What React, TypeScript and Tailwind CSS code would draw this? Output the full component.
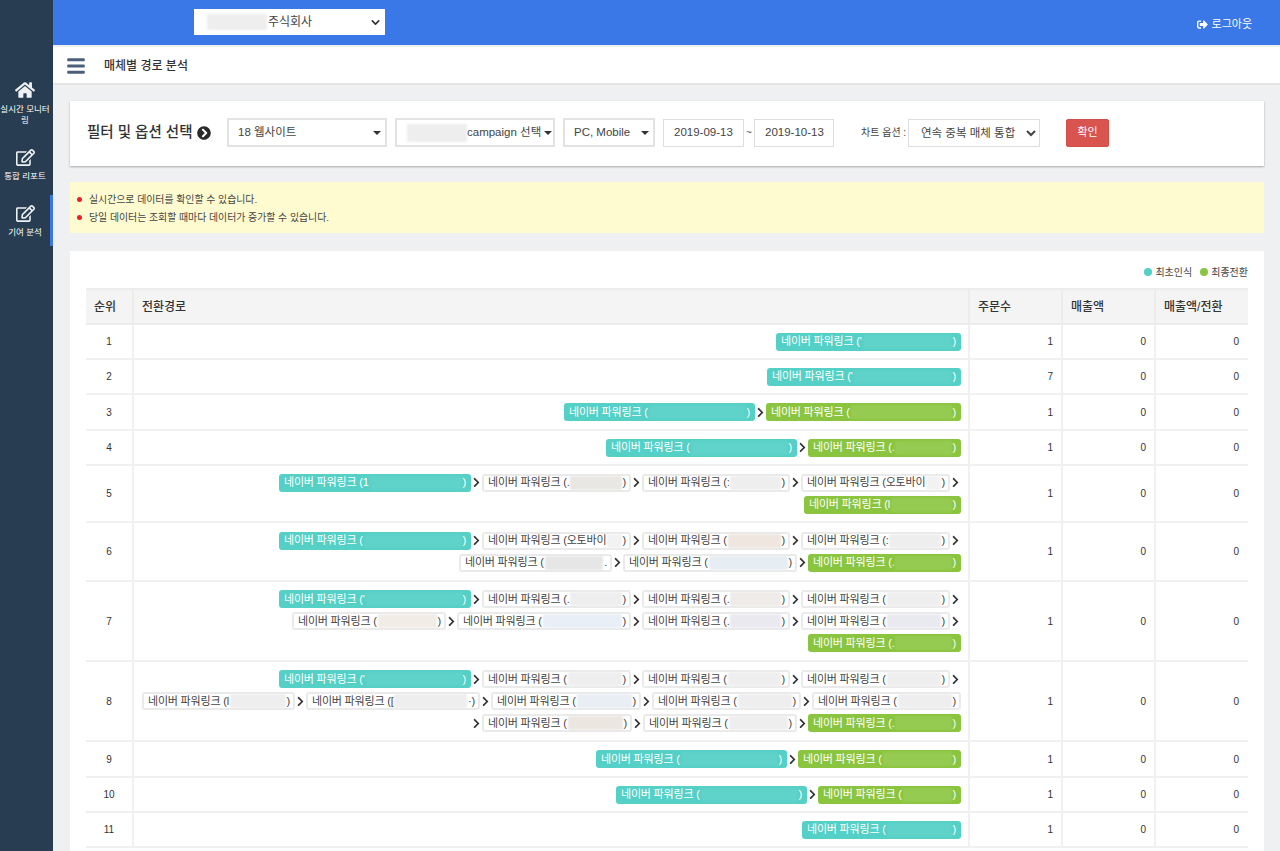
import { FaBars, FaChevronCircleRight, FaChevronRight, FaHome, FaRegEdit, FaSignOutAlt } from "react-icons/fa"
import { LuChevronDown } from "react-icons/lu"

type Kind = "first" | "last" | "mid"
type Chip = { kind: Kind; w: string; lead?: string; tone?: string; tail?: string }
type Row = { h: string; orders: number; lines: (Chip | ">")[][] }

const first = (w: string, lead = ""): Chip => ({ kind: "first", w, lead })
const last = (w: string, lead = ""): Chip => ({ kind: "last", w, lead })
const mid = (w: string, lead = "", tone = "bg-[#eeeeee]", tail = ")"): Chip => ({ kind: "mid", w, lead, tone, tail })

const rows: Row[] = [
  { h: "h-[35px]", orders: 1, lines: [[first("w-[185px]", "'")]] },
  { h: "h-[35px]", orders: 7, lines: [[first("w-[194px]", "'")]] },
  { h: "h-[36px]", orders: 1, lines: [[first("w-[191px]"), ">", last("w-[195px]")]] },
  { h: "h-[35px]", orders: 1, lines: [[first("w-[191px]"), ">", last("w-[153px]", ".")]] },
  {
    h: "h-[57px]",
    orders: 1,
    lines: [
      [first("w-[192px]", "1"), ">", mid("w-[149px]", ".", "bg-[#e9e7e3]"), ">", mid("w-[148px]", ":"), ">", mid("w-[149px]", "오토바이", "bg-[#f2f2f2]"), ">"],
      [last("w-[157px]", "l")],
    ],
  },
  {
    h: "h-[59px]",
    orders: 1,
    lines: [
      [first("w-[192px]"), ">", mid("w-[149px]", "오토바이", "bg-[#f2f2f2]"), ">", mid("w-[148px]", "", "bg-[#eee6df]"), ">", mid("w-[149px]", ":"), ">"],
      [mid("w-[153px]", "", "bg-[#e6e6e6]", "."), ">", mid("w-[174px]", "", "bg-[#e6edf3]"), ">", last("w-[153px]", ".")],
    ],
  },
  {
    h: "h-[80px]",
    orders: 1,
    lines: [
      [first("w-[192px]", "'"), ">", mid("w-[149px]", "."), ">", mid("w-[148px]", ".", "bg-[#efebe8]"), ">", mid("w-[149px]"), ">"],
      [mid("w-[154px]", "", "bg-[#f1ece6]"), ">", mid("w-[174px]", "", "bg-[#e9eff6]"), ">", mid("w-[148px]", ".", "bg-[#e9e9ef]"), ">", mid("w-[149px]", "", "bg-[#e9e9f0]"), ">"],
      [last("w-[153px]", ".")],
    ],
  },
  {
    h: "h-[80px]",
    orders: 1,
    lines: [
      [first("w-[192px]", "'"), ">", mid("w-[149px]"), ">", mid("w-[148px]"), ">", mid("w-[149px]"), ">"],
      [mid("w-[153px]", "l"), ">", mid("w-[174px]", "[", "bg-[#eeeeee]", "·)"), ">", mid("w-[150px]", "", "bg-[#e9eef4]"), ">", mid("w-[149px]"), ">", mid("w-[149px]")],
      [">", mid("w-[150px]", "", "bg-[#ebe6e0]"), ">", mid("w-[154px]"), ">", last("w-[153px]", ".")],
    ],
  },
  { h: "h-[36px]", orders: 1, lines: [[first("w-[191px]"), ">", last("w-[163px]")]] },
  { h: "h-[35px]", orders: 1, lines: [[first("w-[191px]"), ">", last("w-[143px]")]] },
  { h: "h-[35px]", orders: 1, lines: [[first("w-[159px]")]] },
]

function PathChip({ chip }: { chip: Chip }) {
  if (chip.kind === "mid") {
    return (
      <span className={`flex h-[18px] items-center rounded-[3px] border-2 border-[#eaeaea] bg-white pl-[4px] pr-[3px] text-[11px] tracking-[-0.2px] text-[#444] ${chip.w}`}>
        <span className="whitespace-nowrap">네이버 파워링크 ({chip.lead}</span>
        <span className={`mx-[1px] h-[14px] min-w-0 flex-1 blur-[1px] ${chip.tone}`} />
        <span className="whitespace-nowrap">{chip.tail}</span>
      </span>
    )
  }
  const color = chip.kind === "first" ? "bg-[#55d0c6]" : "bg-[#8bc53f]"
  const haze = chip.kind === "first" ? "bg-[#5fd3c9]" : "bg-[#96cb52]"
  return (
    <span className={`flex h-[18px] items-center rounded-[3px] pl-[5px] pr-[5px] text-[11px] tracking-[-0.2px] text-white ${color} ${chip.w}`}>
      <span className="whitespace-nowrap">네이버 파워링크 ({chip.lead}</span>
      <span className={`mx-[1px] h-[14px] min-w-0 flex-1 blur-[1px] ${haze}`} />
      <span>)</span>
    </span>
  )
}

function SideItem({ icon, label, active }: { icon: React.ReactNode; label: string; active?: boolean }) {
  return (
    <div className={`flex flex-col items-center border-r-[3px] pb-[8px] text-center ${active ? "border-[#3b78e7] pt-[9px]" : "border-transparent"}`}>
      {icon}
      <span className="mt-[4px] text-[8.5px] leading-[11px] whitespace-pre text-white">{label}</span>
    </div>
  )
}

function FakeSelect({ w, children }: { w: string; children: React.ReactNode }) {
  return (
    <div className={`flex h-[29px] items-center border-2 border-[#e3e3e3] bg-white text-[11.5px] text-[#444] ${w}`}>
      {children}
    </div>
  )
}

function Caret() {
  return <span className="ml-auto mr-[4px] h-0 w-0 border-x-[4px] border-t-[4px] border-x-transparent border-t-[#333]" />
}

export default function App() {
  return (
    <div className="flex h-screen overflow-hidden bg-[#eff0f2] font-['Liberation_Sans','Noto_Sans_CJK_KR',sans-serif]">
      <aside className="flex w-[53px] shrink-0 flex-col bg-[#283d52] pt-[80px]">
        <SideItem icon={<FaHome className="text-[20px] text-[#eef1f4]" />} label={"실시간 모니터\n링"} />
        <div className="mt-[14px]">
          <SideItem icon={<FaRegEdit className="text-[19px] text-[#eef1f4]" />} label="통합 리포트" />
        </div>
        <div className="mt-[5px]">
          <SideItem active icon={<FaRegEdit className="text-[19px] text-[#eef1f4]" />} label="기여 분석" />
        </div>
      </aside>

      <div className="flex min-w-0 flex-1 flex-col">
        <header className="flex h-[45px] shrink-0 items-center bg-[#3b78e7] pl-[141px] pr-[28px]">
          <div className="mb-[1px] flex h-[26px] w-[191px] items-center bg-white pl-[13px] pr-[3px] text-[12px] text-[#444]">
            <span className="h-[16px] w-[60px] bg-[#eeeeee] blur-[1px]" />
            <span className="ml-[1px]">주식회사</span>
            <LuChevronDown className="ml-auto text-[13px] text-[#333]" strokeWidth={3} />
          </div>
          <div className="ml-auto mt-[3px] flex items-center gap-[4px] text-[11px] text-white">
            <FaSignOutAlt className="text-[11px]" />
            로그아웃
          </div>
        </header>

        <div className="flex h-[40px] shrink-0 items-center border-y-2 border-t-[#eeeeee] border-b-[#e4e4e4] bg-white pl-[13px] pt-[1px]">
          <FaBars className="text-[20px] text-[#4a6078]" />
          <h1 className="ml-[18px] text-[12px] font-medium text-[#333]">매체별 경로 분석</h1>
        </div>

        <main className="flex min-h-0 flex-1 flex-col pl-[17px] pr-[16px] pt-[16px]">
          <section className="flex h-[65px] shrink-0 items-center bg-white pb-[2px] pl-[17px] shadow-[0_1px_2px_rgba(0,0,0,0.3)]">
            <h2 className="flex w-[140px] shrink-0 items-center gap-[5px] text-[14.5px] font-medium whitespace-nowrap text-[#333]">
              필터 및 옵션 선택
              <FaChevronCircleRight className="text-[14px] text-[#2b2b2b]" />
            </h2>
            <div className="flex items-center">
              <FakeSelect w="w-[160px] pl-[9px]">
                18 웹사이트
                <Caret />
              </FakeSelect>
              <div className="ml-[8px]">
                <FakeSelect w="w-[160px] pl-[10px]">
                  <span className="h-[18px] w-[60px] bg-[#eeeeee] blur-[1px]" />
                  <span className="whitespace-nowrap">campaign 선택</span>
                  <span className="ml-[3px] h-0 w-0 border-x-[4px] border-t-[4px] border-x-transparent border-t-[#333]" />
                </FakeSelect>
              </div>
              <div className="ml-[8px]">
                <FakeSelect w="w-[92px] pl-[9px]">
                  PC, Mobile
                  <Caret />
                </FakeSelect>
              </div>
              <div className="ml-[8px] flex h-[28px] w-[81px] items-center border border-[#dddddd] bg-white pl-[10px] text-[11.5px] text-[#444]">2019-09-13</div>
              <span className="w-[10px] text-center text-[10px] text-[#555]">~</span>
              <div className="flex h-[28px] w-[80px] items-center border border-[#dddddd] bg-white pl-[10px] text-[11.5px] text-[#444]">2019-10-13</div>
              <span className="ml-[27px] w-[47px] text-[10px] whitespace-nowrap text-[#444]">차트 옵션 :</span>
              <select className="h-[28px] w-[132px] border border-[#dddddd] bg-white pl-[8px] text-[11.5px] text-[#444]" defaultValue="merge">
                <option value="merge">연속 중복 매체 통합</option>
              </select>
              <button className="ml-[26px] h-[28px] w-[43px] rounded-[2px] border border-[#d0504c] bg-[#d9534f] text-[11px] text-white">확인</button>
            </div>
          </section>

          <section className="mt-[16px] flex h-[51px] shrink-0 flex-col justify-center gap-[7px] bg-[#fffbd0] pl-[7px] pt-[2px] text-[9.9px] leading-[11px] text-[#444]">
            <p className="flex items-center">
              <span className="mr-[7px] h-[5px] w-[5px] rounded-full bg-[#e8202a]" />
              실시간으로 데이터를 확인할 수 있습니다.
            </p>
            <p className="flex items-center">
              <span className="mr-[7px] h-[5px] w-[5px] rounded-full bg-[#e8202a]" />
              당일 데이터는 조회할 때마다 데이터가 증가할 수 있습니다.
            </p>
          </section>

          <section className="mt-[18px] min-h-0 flex-1 overflow-hidden bg-white px-[16px] pt-[16px]">
            <div className="flex h-[21px] items-start justify-end text-[10px] leading-[12px] text-[#444]">
              <span className="mr-[3px] mt-[1px] h-[8px] w-[8px] rounded-full bg-[#55d0c6]" />
              최초인식
              <span className="ml-[8px] mr-[3px] mt-[1px] h-[8px] w-[8px] rounded-full bg-[#8bc53f]" />
              최종전환
            </div>
            <table className="w-full table-fixed">
              <thead>
                <tr className="h-[35px] border-y-2 border-[#ececec] bg-[#f4f4f4] text-left text-[12px] font-medium text-[#333]">
                  <th className="w-[47px] border-r-2 border-[#ececec] pl-[8px] font-medium">순위</th>
                  <th className="border-r-2 border-[#ececec] pl-[8px] font-medium">전환경로</th>
                  <th className="w-[93px] border-r-2 border-[#ececec] pl-[8px] font-medium">주문수</th>
                  <th className="w-[93px] border-r-2 border-[#ececec] pl-[8px] font-medium">매출액</th>
                  <th className="w-[93px] pl-[8px] font-medium">매출액/전환</th>
                </tr>
              </thead>
              <tbody className="text-[10px] text-[#333]">
                {rows.map((row, i) => (
                  <tr key={i} className={`border-b-2 border-[#f0f0f0] ${row.h}`}>
                    <td className="border-r-2 border-[#f0f0f0] text-center">{i + 1}</td>
                    <td className="border-r-2 border-[#f0f0f0] pr-[7px]">
                      <div className="flex flex-col gap-[4px]">
                        {row.lines.map((line, j) => (
                          <div key={j} className="flex items-center justify-end">
                            {line.map((item, k) =>
                              item === ">" ? (
                                <span key={k} className="flex w-[11px] justify-center">
                                  <FaChevronRight className="text-[11px] text-[#333]" />
                                </span>
                              ) : (
                                <PathChip key={k} chip={item} />
                              ),
                            )}
                          </div>
                        ))}
                      </div>
                    </td>
                    <td className="border-r-2 border-[#f0f0f0] pr-[8px] text-right">{row.orders}</td>
                    <td className="border-r-2 border-[#f0f0f0] pr-[8px] text-right">0</td>
                    <td className="pr-[9px] text-right">0</td>
                  </tr>
                ))}
              </tbody>
            </table>
          </section>
        </main>
      </div>
    </div>
  )
}
